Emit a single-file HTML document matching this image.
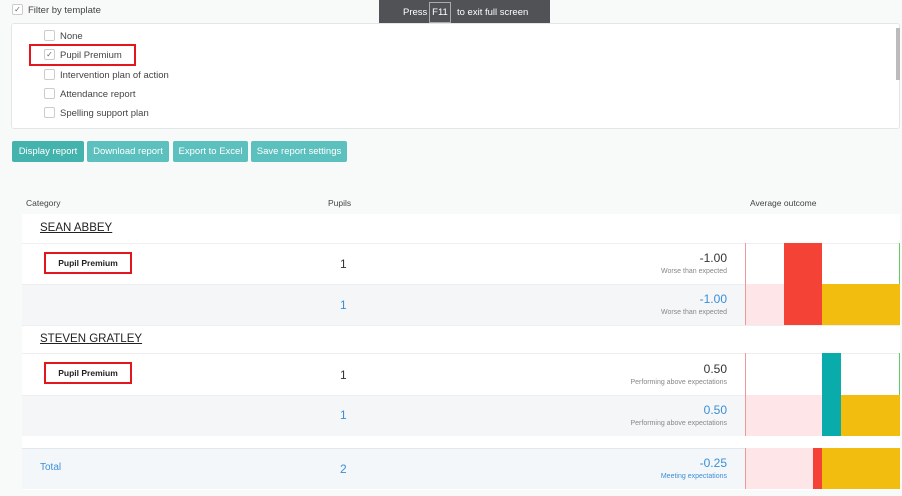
<!DOCTYPE html>
<html><head><style>
*{margin:0;padding:0;box-sizing:border-box}
body{width:902px;height:496px;background:#f8f9f9;font-family:"Liberation Sans",sans-serif;position:relative;overflow:hidden;color:#333}
.a{position:absolute}
.cb{position:absolute;width:11px;height:11px;border:1px solid #ccc;background:#fff;border-radius:2px}
.lbl{position:absolute;font-size:9.5px;color:#444}
.btn{position:absolute;top:141px;height:21px;background:#5bc0be;color:#fff;font-size:9.5px;line-height:21px;text-align:center;border-radius:2px}
.row{position:absolute;left:22px;width:878px;border-top:1px solid #eceeef}
.pp{position:absolute;left:44px;width:88px;height:22px;border:2px solid #e3161e;background:#fff;font-size:8.5px;font-weight:bold;text-align:center;line-height:18px;color:#222}
.num{position:absolute;left:340px;font-size:12px}
.val{position:absolute;right:175px;text-align:right;font-size:12px}
.sub{position:absolute;right:175px;text-align:right;font-size:7px;color:#888}
.blu{color:#3a8fd6}
.name{position:absolute;left:40px;font-size:11.5px;text-decoration:underline;color:#222}
</style></head><body>
<div class="cb" style="left:12px;top:4px;font-size:8px;line-height:9px;text-align:center;color:#666">✓</div>
<div class="lbl" style="left:28px;top:5px">Filter by template</div>
<div class="a" style="left:379px;top:0;width:171px;height:27px;background:#505256;color:#fff;font-size:9.5px">
<span class="a" style="left:24px;top:7px">Press</span>
<span class="a" style="left:50px;top:2px;width:22px;height:21px;border:1px solid #aaa;text-align:center;line-height:19px">F11</span>
<span class="a" style="left:78px;top:7px">to exit full screen</span></div>
<div class="a" style="left:11px;top:23px;width:889px;height:106px;background:#fff;border:1px solid #e3e6e8;border-radius:3px"></div>
<div class="a" style="left:896px;top:28px;width:4px;height:52px;background:#bbb"></div>
<div class="cb" style="left:44px;top:30px"></div><div class="lbl" style="left:60px;top:31px">None</div>
<div class="a" style="left:29px;top:44px;width:107px;height:22px;border:2px solid #e3161e"></div>
<div class="cb" style="left:44px;top:49px;font-size:8px;line-height:9px;text-align:center;color:#666">✓</div><div class="lbl" style="left:60px;top:50px">Pupil Premium</div>
<div class="cb" style="left:44px;top:69px"></div><div class="lbl" style="left:60px;top:70px">Intervention plan of action</div>
<div class="cb" style="left:44px;top:88px"></div><div class="lbl" style="left:60px;top:89px">Attendance report</div>
<div class="cb" style="left:44px;top:107px"></div><div class="lbl" style="left:60px;top:108px">Spelling support plan</div>
<div class="btn" style="left:12px;width:72px;background:#45b3ad">Display report</div>
<div class="btn" style="left:87px;width:82px">Download report</div>
<div class="btn" style="left:173px;width:75px">Export to Excel</div>
<div class="btn" style="left:251px;width:96px">Save report settings</div>
<div class="lbl" style="left:26px;top:198px;font-size:8.5px">Category</div>
<div class="lbl" style="left:328px;top:198px;font-size:8.5px">Pupils</div>
<div class="lbl" style="left:750px;top:198px;font-size:8.5px">Average outcome</div>
<div class="a" style="left:22px;top:214px;width:878px;height:276px;background:#fff"></div>
<div class="name" style="top:222px">SEAN ABBEY</div>
<div class="row" style="top:243px;height:41px;background:#fff"></div>
<div class="row" style="top:284px;height:41px;background:#f4f6f8"></div>
<div class="pp" style="top:252px">Pupil Premium</div>
<div class="num" style="top:257px">1</div>
<div class="num blu" style="top:298px">1</div>
<div class="val" style="top:251px">-1.00</div><div class="sub" style="top:268px">Worse than expected</div>
<div class="val blu" style="top:292px">-1.00</div><div class="sub" style="top:309px">Worse than expected</div>
<div class="a" style="left:746px;top:284px;width:38px;height:41px;background:#fde5e8"></div>
<div class="a" style="left:784px;top:243px;width:38px;height:82px;background:#f44336"></div>
<div class="a" style="left:822px;top:284px;width:78px;height:41px;background:#f2bd0e"></div>
<div class="a" style="left:899px;top:243px;width:1px;height:41px;background:#6c6"></div>
<div class="row" style="top:325px;height:28px;background:#fff"></div>
<div class="name" style="top:333px">STEVEN GRATLEY</div>
<div class="row" style="top:353px;height:42px;background:#fff"></div>
<div class="row" style="top:395px;height:41px;background:#f4f6f8"></div>
<div class="pp" style="top:362px">Pupil Premium</div>
<div class="num" style="top:368px">1</div>
<div class="num blu" style="top:408px">1</div>
<div class="val" style="top:362px">0.50</div><div class="sub" style="top:379px">Performing above expectations</div>
<div class="val blu" style="top:403px">0.50</div><div class="sub" style="top:420px">Performing above expectations</div>
<div class="a" style="left:746px;top:395px;width:76px;height:41px;background:#fde5e8"></div>
<div class="a" style="left:822px;top:353px;width:19px;height:83px;background:#0aabab"></div>
<div class="a" style="left:841px;top:395px;width:59px;height:41px;background:#f2bd0e"></div>
<div class="a" style="left:899px;top:353px;width:1px;height:42px;background:#6c6"></div>
<div class="row" style="top:448px;height:41px;background:#f4f7fa;border-top:1px solid #e3e8ec"></div>
<div class="a blu" style="left:40px;top:462px;font-size:10px">Total</div>
<div class="num blu" style="top:462px">2</div>
<div class="val blu" style="top:456px">-0.25</div><div class="sub blu" style="top:473px">Meeting expectations</div>
<div class="a" style="left:746px;top:448px;width:67px;height:41px;background:#fde5e8"></div>
<div class="a" style="left:813px;top:448px;width:9px;height:41px;background:#f44336"></div>
<div class="a" style="left:822px;top:448px;width:78px;height:41px;background:#f2bd0e"></div>
<div class="a" style="left:745px;top:243px;width:1px;height:82px;background:#e99"></div>
<div class="a" style="left:745px;top:353px;width:1px;height:83px;background:#e99"></div>
<div class="a" style="left:745px;top:448px;width:1px;height:41px;background:#e99"></div>
</body></html>
